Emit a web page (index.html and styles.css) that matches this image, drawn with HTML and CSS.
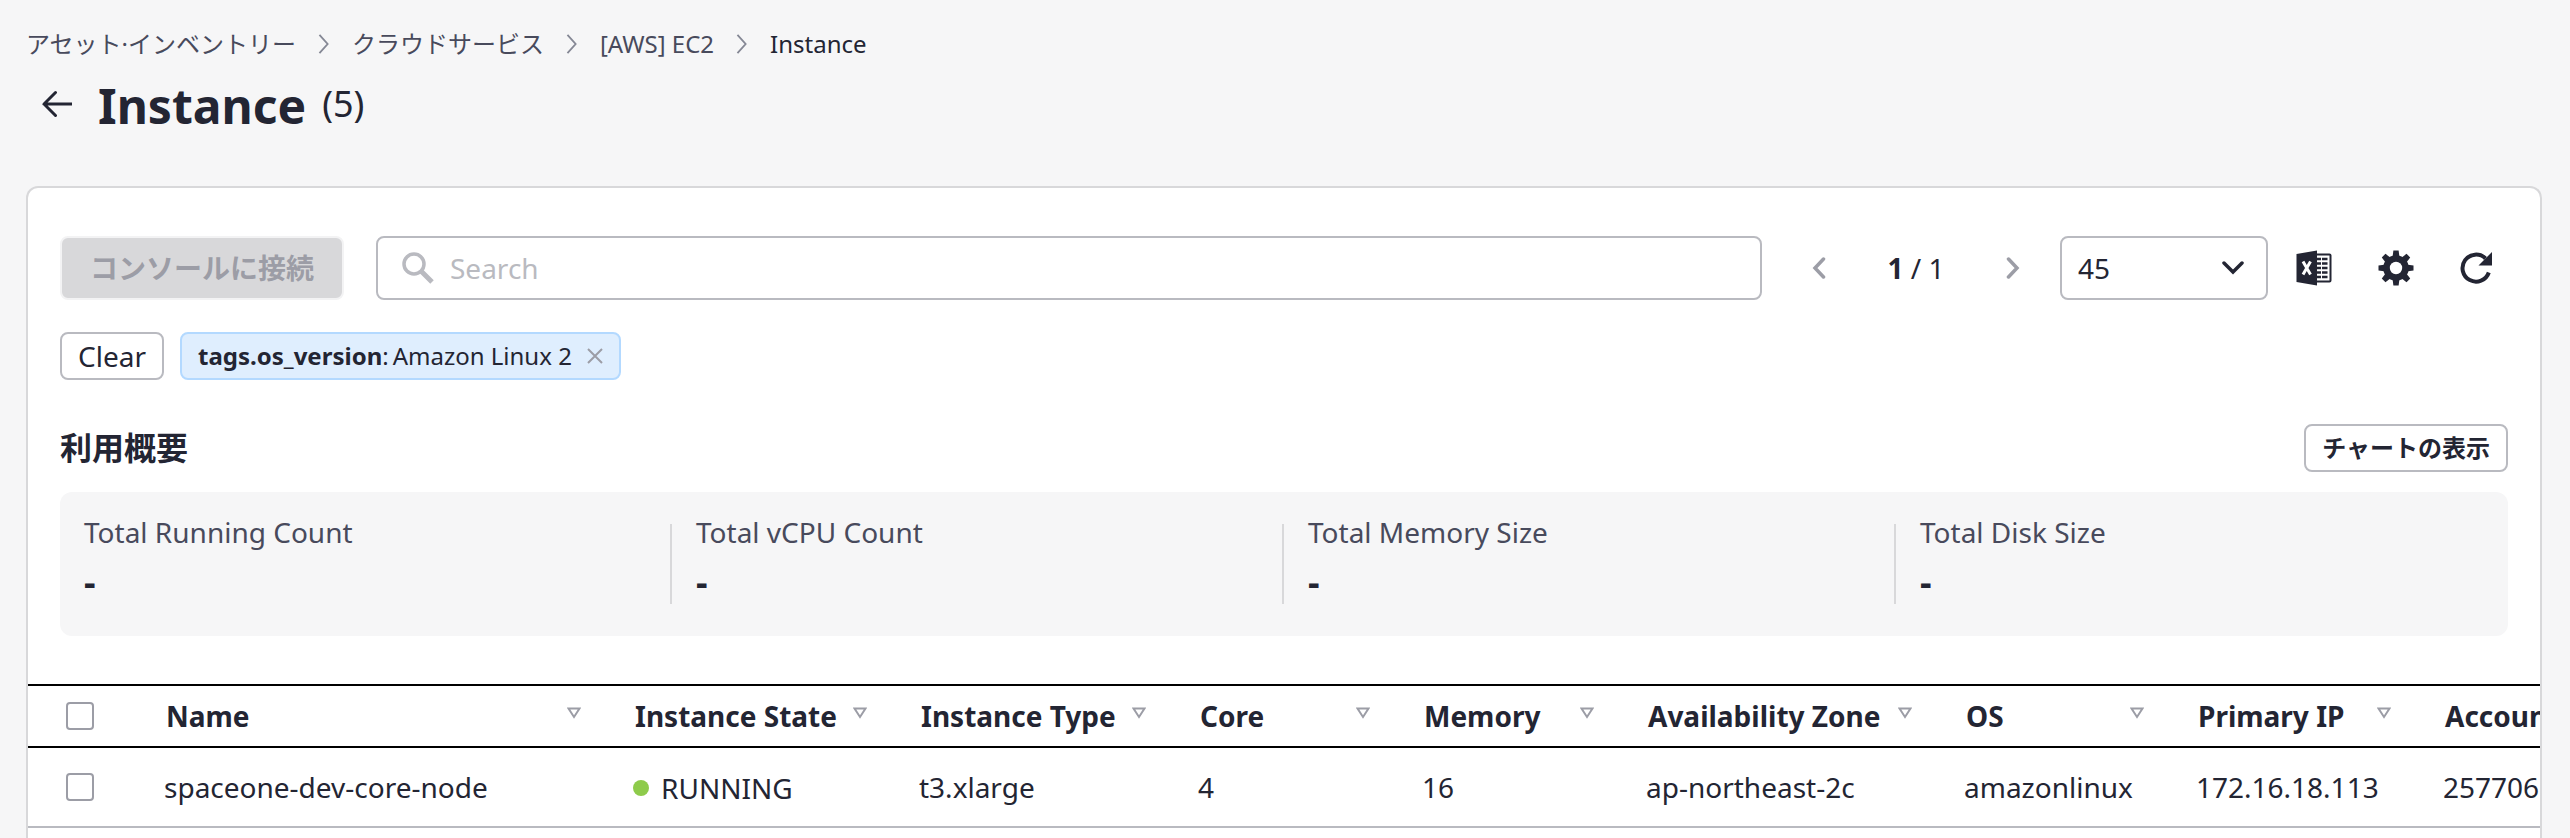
FILE: index.html
```html
<!DOCTYPE html>
<html lang="ja">
<head>
<meta charset="utf-8">
<title>Instance</title>
<link rel="stylesheet" href="styles.css">
</head>
<body>
<svg class="defs" aria-hidden="true">
  <symbol id="chevron" viewBox="0 0 12 22"><path d="M1 1l9 10-9 10" fill="none" stroke="currentColor" stroke-width="2"/></symbol>
  <symbol id="sort" viewBox="0 0 14 12"><path d="M1.5 1.5h11L7 10z" fill="none" stroke="currentColor" stroke-width="2"/></symbol>
</svg>
<nav class="breadcrumb" aria-label="breadcrumb">
  <a href="#">アセット·インベントリー</a>
  <svg class="crumb-sep"><use href="#chevron"/></svg>
  <a href="#">クラウドサービス</a>
  <svg class="crumb-sep"><use href="#chevron"/></svg>
  <a href="#">[AWS] EC2</a>
  <svg class="crumb-sep"><use href="#chevron"/></svg>
  <span class="current">Instance</span>
</nav>
<header class="page-head">
  <button class="back" aria-label="Back"><svg width="30" height="28" viewBox="0 0 30 28"><path d="M13.500 2.500L2 14l11.500 11.500M2 14h28" fill="none" stroke="currentColor" stroke-width="3" stroke-linecap="round"/></svg></button>
  <h1>Instance</h1>
  <span class="count">(5)</span>
</header>
<main class="card">
  <div class="toolbar">
    <button class="connect" disabled>コンソールに接続</button>
    <label class="search">
      <svg width="32" height="32" viewBox="0 0 32 32"><circle cx="12" cy="12" r="10" fill="none" stroke="currentColor" stroke-width="3.500"/><path d="M19.500 19.500L30 30" stroke="currentColor" stroke-width="5"/></svg>
      <input type="text" placeholder="Search" aria-label="Search">
    </label>
    <div class="pager">
      <button aria-label="Previous page"><svg width="14" height="22" viewBox="0 0 14 22"><path d="M11.500 2L3 11l8.500 9" fill="none" stroke="currentColor" stroke-width="3.500" stroke-linecap="round"/></svg></button>
      <span class="page-no"><b>1</b> / 1</span>
      <button aria-label="Next page"><svg width="14" height="22" viewBox="0 0 14 22"><path d="M2.500 2L11 11l-8.500 9" fill="none" stroke="currentColor" stroke-width="3.500" stroke-linecap="round"/></svg></button>
    </div>
    <div class="size">
      <select aria-label="Page size"><option>45</option></select>
      <svg width="22" height="14" viewBox="0 0 22 14"><path d="M2 2l9 9 9-9" fill="none" stroke="currentColor" stroke-width="3.500" stroke-linecap="round"/></svg>
    </div>
    <div class="tools">
      <button aria-label="Export to Excel"><svg width="36" height="36" viewBox="0 0 36 36">
        <path d="M20 4.500h13.500q1 0 1 1v25q0 1-1 1H20" fill="none" stroke="currentColor" stroke-width="2"/>
        <path d="M0.500 4L21 0.500v35L0.500 32z" fill="currentColor"/>
        <path d="M21 9h4M21 13.500h4M21 18h4M21 22.500h4M21 27h4M26 9h5.500M26 13.500h5.500M26 18h5.500M26 22.500h5.500M26 27h5.500" stroke="currentColor" stroke-width="2.500"/>
        <path d="M7 11.500l7.500 13M14.500 11.500L7 24.500" stroke="#fff" stroke-width="3"/></svg></button>
      <button aria-label="Settings"><svg width="36" height="36" viewBox="-18 -18 36 36">
        <g fill="currentColor"><path id="teeth" d="M-3.600-10L-2.600-17.500h5.200L3.600-10V10L2.600 17.500h-5.200L-3.600 10z"/><use href="#teeth" transform="rotate(45)"/><use href="#teeth" transform="rotate(90)"/><use href="#teeth" transform="rotate(135)"/><circle r="12.800"/></g><circle r="6.200" fill="#fff"/></svg></button>
      <button aria-label="Refresh"><svg width="32" height="32" viewBox="0 0 32 32"><path d="M28.800 20.500A13.500 13.500 0 1 1 25.500 6.500" fill="none" stroke="currentColor" stroke-width="4"/><path d="M32 0v13.500H18.500z" fill="currentColor"/></svg></button>
    </div>
  </div>
  <div class="filters">
    <button class="clear">Clear</button>
    <span class="tag"><b>tags.os_version</b>:&thinsp;Amazon Linux 2
      <button aria-label="Remove filter"><svg width="16" height="16" viewBox="0 0 16 16"><path d="M1 1l14 14M15 1L1 15" stroke="currentColor" stroke-width="2"/></svg></button></span>
  </div>
  <div class="section-head">
    <h2>利用概要</h2>
    <button class="chart">チャートの表示</button>
  </div>
  <dl class="summary">
    <div class="stat"><dt>Total Running Count</dt><dd>-</dd></div>
    <div class="stat"><dt>Total vCPU Count</dt><dd>-</dd></div>
    <div class="stat"><dt>Total Memory Size</dt><dd>-</dd></div>
    <div class="stat"><dt>Total Disk Size</dt><dd>-</dd></div>
  </dl>
  <div class="table-wrap">
    <table>
      <colgroup><col class="c-check"><col class="c-name"><col class="c-state"><col class="c-type"><col class="c-num"><col class="c-num"><col class="c-zone"><col class="c-os"><col class="c-ip"><col class="c-account"></colgroup>
      <thead>
        <tr>
          <th class="check"><input type="checkbox" aria-label="Select all"></th>
          <th><div class="th">Name<svg><use href="#sort"/></svg></div></th>
          <th><div class="th">Instance State<svg><use href="#sort"/></svg></div></th>
          <th><div class="th">Instance Type<svg><use href="#sort"/></svg></div></th>
          <th><div class="th">Core<svg><use href="#sort"/></svg></div></th>
          <th><div class="th">Memory<svg><use href="#sort"/></svg></div></th>
          <th><div class="th">Availability Zone<svg><use href="#sort"/></svg></div></th>
          <th><div class="th">OS<svg><use href="#sort"/></svg></div></th>
          <th><div class="th">Primary IP<svg><use href="#sort"/></svg></div></th>
          <th><div class="th">Account</div></th>
        </tr>
      </thead>
      <tbody>
        <tr>
          <td class="check"><input type="checkbox" aria-label="Select spaceone-dev-core-node"></td>
          <td>spaceone-dev-core-node</td>
          <td><span class="state">RUNNING</span></td>
          <td>t3.xlarge</td>
          <td>4</td>
          <td>16</td>
          <td>ap-northeast-2c</td>
          <td>amazonlinux</td>
          <td>172.16.18.113</td>
          <td>257706</td>
        </tr>
      </tbody>
    </table>
  </div>
</main>
</body>
</html>
```
FILE: styles.css
```css
* { box-sizing: border-box; }
html { height: 100%; }
body {
  margin: 0;
  min-height: 100%;
  padding: 24px 28px 0 26px;
  display: flex;
  flex-direction: column;
  background: #f6f6f7;
  color: #232533;
  font: 28px/40px "Noto Sans", "Noto Sans CJK JP", sans-serif;
  overflow: hidden;
}
button, input, select { font: inherit; color: inherit; margin: 0; }
button { padding: 0; border: 0; background: none; }
svg { display: block; flex: none; }
.defs { position: absolute; width: 0; height: 0; }

.breadcrumb { display: flex; align-items: center; gap: 22px; font-size: 24px; color: #484a5c; }
.breadcrumb a { color: inherit; text-decoration: none; }
.breadcrumb .current { color: #232533; }
.crumb-sep { width: 12px; height: 20px; color: #858895; }

.page-head { display: flex; align-items: center; height: 80px; margin-bottom: 42px; padding-left: 16px; }
.back { margin-right: 26px; }
h1 { margin: 4px 16px 0 0; font-size: 48px; line-height: 64px; font-weight: 700; }
.count { font-size: 36px; }

.card {
  flex: 1;
  border: 2px solid #d8d8da;
  border-bottom: 0;
  border-radius: 12px 12px 0 0;
  background: #fff;
  padding: 48px 0 0;
}
.toolbar { display: flex; align-items: center; margin: 0 32px; height: 64px; }
.connect {
  width: 284px;
  height: 64px;
  border: 2px solid #f3f3f4;
  border-radius: 8px;
  background: #d8d8da;
  color: #9c9da6;
  font-weight: 700;
}
.search {
  flex: 1;
  display: flex;
  align-items: center;
  gap: 16px;
  height: 64px;
  margin-left: 32px;
  padding: 0 24px;
  border: 2px solid #b9bac0;
  border-radius: 8px;
  color: #b9bac0;
}
.search input { flex: 1; border: 0; padding: 0; background: none; outline: 0; color: #232533; }
.search input::placeholder { color: #b9bac0; opacity: 1; }
.pager { display: flex; align-items: center; margin: 0 40px 0 50px; }
.pager button { color: #9c9da6; }
.page-no { width: 180px; text-align: center; }
.size { display: grid; align-items: center; width: 208px; }
.size select {
  grid-area: 1 / 1;
  height: 64px;
  padding: 0 16px;
  border: 2px solid #b9bac0;
  border-radius: 8px;
  background: #fff;
  appearance: none;
}
.size svg { grid-area: 1 / 1; justify-self: end; margin-right: 24px; pointer-events: none; }
.tools { display: flex; align-items: center; gap: 46px; margin: 0 16px 0 28px; }

.filters { display: flex; gap: 16px; margin: 32px 32px 44px; }
.clear, .chart { height: 48px; padding: 0 16px; border: 2px solid #b9bac0; border-radius: 8px; background: #fff; }
.tag {
  display: flex;
  align-items: center;
  height: 48px;
  padding: 0 16px;
  border: 2px solid #b3d9ff;
  border-radius: 8px;
  background: #dfeefe;
  font-size: 24px;
}
.tag button { margin-left: 15px; color: #9c9da6; }

.section-head { display: flex; align-items: center; justify-content: space-between; margin: 0 32px; }
h2 { margin: 0; font-size: 32px; line-height: 48px; font-weight: 700; }
.chart { font-size: 24px; font-weight: 700; }

.summary { display: grid; grid-template-columns: repeat(4, 1fr); margin: 20px 32px 48px; padding: 32px 0; border-radius: 12px; background: #f6f6f7; }
.stat { height: 80px; padding-left: 24px; border-right: 2px solid #d8d8da; }
.stat:last-child { border-right: 0; }
dt { color: #484a5c; line-height: 16px; }
dd { margin: 18px 0 0; font-size: 36px; line-height: 48px; font-weight: 700; }

.table-wrap { overflow: hidden; }
table { table-layout: fixed; width: 100%; min-width: 2512px; border-collapse: separate; border-spacing: 0; }
.c-check { width: 104px; }
.c-name { width: 469px; }
.c-state { width: 286px; }
.c-type { width: 279px; }
.c-num { width: 224px; }
.c-zone { width: 318px; }
.c-os { width: 232px; }
.c-ip { width: 247px; }
th, td { padding: 0 0 0 32px; text-align: left; white-space: nowrap; overflow: hidden; }
th { height: 64px; padding-left: 34px; border-top: 2px solid #000; border-bottom: 2px solid #000; font-weight: 700; }
td { height: 80px; border-bottom: 2px solid #b9bac0; }
.check { padding-left: 38px; }
.check input { display: block; width: 28px; height: 28px; appearance: none; border: 2px solid #9c9da6; border-radius: 4px; background: #fff; }
.th { display: flex; align-items: center; justify-content: space-between; padding-right: 20px; }
.th svg { width: 14px; height: 12px; margin-bottom: 6px; color: #9c9da6; }
.state { display: flex; align-items: center; gap: 12px; padding-top: 2px; }
.state::before { content: ""; width: 16px; height: 16px; border-radius: 50%; background: #8ecb4b; }
```
